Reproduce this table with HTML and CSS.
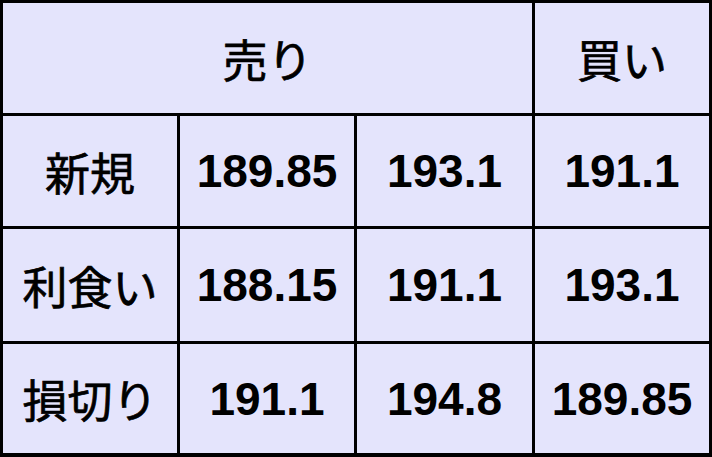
FILE: index.html
```html
<!DOCTYPE html>
<html lang="ja">
<head>
<meta charset="utf-8">
<link rel="stylesheet" href="styles.css">
</head>
<body>
<div class="table">
  <div class="cell head span3 jp">売り</div>
  <div class="cell head jp">買い</div>

  <div class="cell jp">新規</div>
  <div class="cell num">189.85</div>
  <div class="cell num">193.1</div>
  <div class="cell num">191.1</div>

  <div class="cell jp">利食い</div>
  <div class="cell num">188.15</div>
  <div class="cell num">191.1</div>
  <div class="cell num">193.1</div>

  <div class="cell jp">損切り</div>
  <div class="cell num">191.1</div>
  <div class="cell num">194.8</div>
  <div class="cell num">189.85</div>
</div>
</body>
</html>
```
FILE: styles.css
```css
html, body {
  margin: 0;
  padding: 0;
  background: #ffffff;
}
.table {
  width: 712px;
  height: 457px;
  box-sizing: border-box;
  background: #000;
  padding: 3px 3px 4px 3px;
  display: grid;
  grid-template-columns: 174px 174px 175px 174px;
  grid-template-rows: 110px 110px 112px 109px;
  gap: 3px;
}
.cell {
  background: #e4e4fc;
  display: flex;
  align-items: center;
  justify-content: center;
  color: #000;
}
.span3 {
  grid-column: span 3;
}
.jp {
  font-family: "Noto Sans CJK JP", sans-serif;
  font-weight: 400;
  font-size: 45px;
  -webkit-text-stroke: 0.7px #000;
}
.num {
  font-family: "Liberation Sans", Arial, sans-serif;
  font-weight: 700;
  font-size: 46px;
}
```
